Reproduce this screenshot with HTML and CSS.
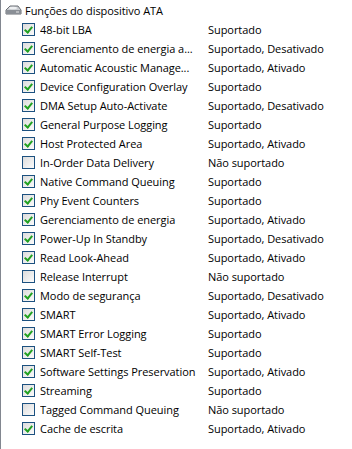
FILE: index.html
```html
<!DOCTYPE html>
<html lang="pt">
<head>
<meta charset="UTF-8">
<title>Funções do dispositivo ATA</title>
<link rel="stylesheet" href="styles.css">
</head>
<body>
<div class="panel">
    <div class="group">
        <svg class="drive" width="17" height="13" viewBox="0 0 17 13">
            <path d="M1 6 L5 2 L13 2 L16 6 L16 10 L1 10 Z" fill="#c9ccd0" stroke="#6b6f75" stroke-width="1"/>
            <path d="M1 6 L16 6 L16 10 L1 10 Z" fill="#8a8f96"/>
            <ellipse cx="8" cy="4" rx="4" ry="1.3" fill="#eef0f2"/>
            <rect x="11" y="7.5" width="3" height="1" fill="#e8e8e8"/>
        </svg>
        <span>Funções do dispositivo ATA</span>
    </div>
    <ul class="features">
        <li><span class="box on"></span><span class="name">48-bit LBA</span><span class="val">Suportado</span></li>
        <li><span class="box on"></span><span class="name">Gerenciamento de energia a...</span><span class="val">Suportado, Desativado</span></li>
        <li><span class="box on"></span><span class="name">Automatic Acoustic Manage...</span><span class="val">Suportado, Ativado</span></li>
        <li><span class="box on"></span><span class="name">Device Configuration Overlay</span><span class="val">Suportado</span></li>
        <li><span class="box on"></span><span class="name">DMA Setup Auto-Activate</span><span class="val">Suportado, Desativado</span></li>
        <li><span class="box on"></span><span class="name">General Purpose Logging</span><span class="val">Suportado</span></li>
        <li><span class="box on"></span><span class="name">Host Protected Area</span><span class="val">Suportado, Ativado</span></li>
        <li><span class="box"></span><span class="name">In-Order Data Delivery</span><span class="val">Não suportado</span></li>
        <li><span class="box on"></span><span class="name">Native Command Queuing</span><span class="val">Suportado</span></li>
        <li><span class="box on"></span><span class="name">Phy Event Counters</span><span class="val">Suportado</span></li>
        <li><span class="box on"></span><span class="name">Gerenciamento de energia</span><span class="val">Suportado, Ativado</span></li>
        <li><span class="box on"></span><span class="name">Power-Up In Standby</span><span class="val">Suportado, Desativado</span></li>
        <li><span class="box on"></span><span class="name">Read Look-Ahead</span><span class="val">Suportado, Ativado</span></li>
        <li><span class="box"></span><span class="name">Release Interrupt</span><span class="val">Não suportado</span></li>
        <li><span class="box on"></span><span class="name">Modo de segurança</span><span class="val">Suportado, Desativado</span></li>
        <li><span class="box on"></span><span class="name">SMART</span><span class="val">Suportado, Ativado</span></li>
        <li><span class="box on"></span><span class="name">SMART Error Logging</span><span class="val">Suportado</span></li>
        <li><span class="box on"></span><span class="name">SMART Self-Test</span><span class="val">Suportado</span></li>
        <li><span class="box on"></span><span class="name">Software Settings Preservation</span><span class="val">Suportado, Ativado</span></li>
        <li><span class="box on"></span><span class="name">Streaming</span><span class="val">Suportado</span></li>
        <li><span class="box"></span><span class="name">Tagged Command Queuing</span><span class="val">Não suportado</span></li>
        <li><span class="box on"></span><span class="name">Cache de escrita</span><span class="val">Suportado, Ativado</span></li>
    </ul>
</div>
</body>
</html>
```

FILE: styles.css
```css
/* Feature list panel */
html, body {
    margin: 0;
    height: 100%;
    background-color: #fff;
}
body {
    font-family: "Open Sans", "Noto Sans", sans-serif;
    font-size: 11px;
    letter-spacing: -0.05px;
    color: #000;
}
.panel {
    height: 100%;
    box-sizing: border-box;
    border-left: 1px solid #828790;
    padding-top: 1px;
}
.group {
    display: flex;
    align-items: center;
    height: 19px;
    padding-left: 4px;
    gap: 3px;
}
.features {
    list-style: none;
    margin: 0;
    padding: 0;
}
.features li {
    display: flex;
    align-items: center;
    height: 19px;
    padding-left: 21px;
}
.box {
    width: 11px;
    height: 11px;
    border: 1px solid #1c5180;
    background: linear-gradient(135deg, #dcdcdc, #fbfbfb);
    margin-right: 5px;
    position: relative;
    flex: none;
}
.box.on::after {
    content: "";
    position: absolute;
    left: 3px;
    top: 1px;
    width: 3px;
    height: 6px;
    border: solid #21a121;
    border-width: 0 2px 2px 0;
    transform: rotate(40deg);
}
.name {
    width: 168px;
    white-space: nowrap;
    overflow: hidden;
    flex: none;
}
.val {
    white-space: nowrap;
}
```
